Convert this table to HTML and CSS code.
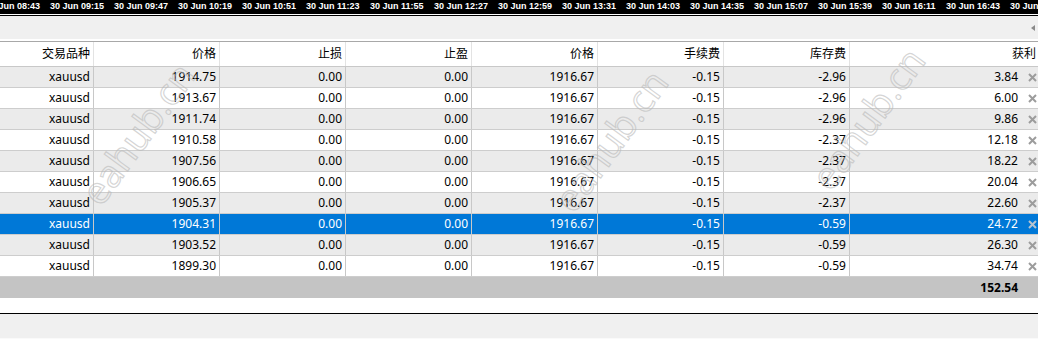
FILE: index.html
```html
<!DOCTYPE html>
<html>
<head>
<meta charset="utf-8">
<link rel="stylesheet" href="styles.css">
</head>
<body>
<div class="page">
  <div class="timebar">
    <span class="tl">30 Jun 08:43</span><span class="tl">30 Jun 09:15</span><span class="tl">30 Jun 09:47</span><span class="tl">30 Jun 10:19</span><span class="tl">30 Jun 10:51</span><span class="tl">30 Jun 11:23</span><span class="tl">30 Jun 11:55</span><span class="tl">30 Jun 12:27</span><span class="tl">30 Jun 12:59</span><span class="tl">30 Jun 13:31</span><span class="tl">30 Jun 14:03</span><span class="tl">30 Jun 14:35</span><span class="tl">30 Jun 15:07</span><span class="tl">30 Jun 15:39</span><span class="tl">30 Jun 16:11</span><span class="tl">30 Jun 16:43</span><span class="tl">30 Jun 17:15</span>
  </div>
  <div class="toolbar"><span class="scroll-arrow"></span></div>
  <div class="gap-white"></div>

  <div class="grid">
    <div class="row head">
      <div class="c">交易品种</div><div class="c">价格</div><div class="c">止损</div><div class="c">止盈</div><div class="c">价格</div><div class="c">手续费</div><div class="c">库存费</div><div class="c last">获利</div>
    </div>

    <div class="row alt">
      <div class="c">xauusd</div><div class="c">1914.75</div><div class="c">0.00</div><div class="c">0.00</div><div class="c">1916.67</div><div class="c">-0.15</div><div class="c">-2.96</div><div class="c last"><span>3.84</span><svg class="x" viewBox="0 0 9 9"><path d="M1 1L8 8M8 1L1 8"/></svg></div>
    </div>
    <div class="row">
      <div class="c">xauusd</div><div class="c">1913.67</div><div class="c">0.00</div><div class="c">0.00</div><div class="c">1916.67</div><div class="c">-0.15</div><div class="c">-2.96</div><div class="c last"><span>6.00</span><svg class="x" viewBox="0 0 9 9"><path d="M1 1L8 8M8 1L1 8"/></svg></div>
    </div>
    <div class="row alt">
      <div class="c">xauusd</div><div class="c">1911.74</div><div class="c">0.00</div><div class="c">0.00</div><div class="c">1916.67</div><div class="c">-0.15</div><div class="c">-2.96</div><div class="c last"><span>9.86</span><svg class="x" viewBox="0 0 9 9"><path d="M1 1L8 8M8 1L1 8"/></svg></div>
    </div>
    <div class="row">
      <div class="c">xauusd</div><div class="c">1910.58</div><div class="c">0.00</div><div class="c">0.00</div><div class="c">1916.67</div><div class="c">-0.15</div><div class="c">-2.37</div><div class="c last"><span>12.18</span><svg class="x" viewBox="0 0 9 9"><path d="M1 1L8 8M8 1L1 8"/></svg></div>
    </div>
    <div class="row alt">
      <div class="c">xauusd</div><div class="c">1907.56</div><div class="c">0.00</div><div class="c">0.00</div><div class="c">1916.67</div><div class="c">-0.15</div><div class="c">-2.37</div><div class="c last"><span>18.22</span><svg class="x" viewBox="0 0 9 9"><path d="M1 1L8 8M8 1L1 8"/></svg></div>
    </div>
    <div class="row">
      <div class="c">xauusd</div><div class="c">1906.65</div><div class="c">0.00</div><div class="c">0.00</div><div class="c">1916.67</div><div class="c">-0.15</div><div class="c">-2.37</div><div class="c last"><span>20.04</span><svg class="x" viewBox="0 0 9 9"><path d="M1 1L8 8M8 1L1 8"/></svg></div>
    </div>
    <div class="row alt">
      <div class="c">xauusd</div><div class="c">1905.37</div><div class="c">0.00</div><div class="c">0.00</div><div class="c">1916.67</div><div class="c">-0.15</div><div class="c">-2.37</div><div class="c last"><span>22.60</span><svg class="x" viewBox="0 0 9 9"><path d="M1 1L8 8M8 1L1 8"/></svg></div>
    </div>
    <div class="row sel">
      <div class="c">xauusd</div><div class="c">1904.31</div><div class="c">0.00</div><div class="c">0.00</div><div class="c">1916.67</div><div class="c">-0.15</div><div class="c">-0.59</div><div class="c last"><span>24.72</span><svg class="x" viewBox="0 0 9 9"><path d="M1 1L8 8M8 1L1 8"/></svg></div>
    </div>
    <div class="row alt">
      <div class="c">xauusd</div><div class="c">1903.52</div><div class="c">0.00</div><div class="c">0.00</div><div class="c">1916.67</div><div class="c">-0.15</div><div class="c">-0.59</div><div class="c last"><span>26.30</span><svg class="x" viewBox="0 0 9 9"><path d="M1 1L8 8M8 1L1 8"/></svg></div>
    </div>
    <div class="row">
      <div class="c">xauusd</div><div class="c">1899.30</div><div class="c">0.00</div><div class="c">0.00</div><div class="c">1916.67</div><div class="c">-0.15</div><div class="c">-0.59</div><div class="c last"><span>34.74</span><svg class="x" viewBox="0 0 9 9"><path d="M1 1L8 8M8 1L1 8"/></svg></div>
    </div>

    <div class="total">
      <span class="total-val">152.54</span>
    </div>
  </div>

  <div class="blank"></div>
  <div class="statusbar"></div>

  <span class="wm wm1">eahub.cn</span>
  <span class="wm wm2">eahub.cn</span>
  <span class="wm wm3">eahub.cn</span>
</div>
</body>
</html>
```

FILE: styles.css
```css
* { box-sizing: border-box; }
html, body { margin: 0; padding: 0; }
body {
  width: 1038px;
  height: 340px;
  overflow: hidden;
  background: #fff;
  font-family: "Noto Sans", "Noto Sans CJK SC", sans-serif;
  font-size: 12px;
  color: #000;
}
.page {
  position: relative;
  width: 1038px;
  height: 340px;
  overflow: hidden;
}

/* time axis */
.timebar {
  height: 15px;
  background: #000;
  border-bottom: 1px solid #fff;
  display: flex;
  margin-left: -14px;
  overflow: hidden;
  white-space: nowrap;
}
.tl {
  flex: 0 0 64px;
  color: #fff;
  font-family: "Liberation Sans", Arial, sans-serif;
  font-weight: bold;
  font-size: 9px;
  line-height: 13px;
}

.toolbar {
  height: 24px;
  background: #f0f0f0;
  border-top: 1px solid #000;
  display: flex;
  align-items: center;
  justify-content: flex-end;
  padding-right: 3px;
}
.scroll-arrow {
  width: 0;
  height: 0;
  border-top: 3px solid transparent;
  border-bottom: 3px solid transparent;
  border-right: 4px solid #8a8a8a;
}
.gap-white {
  height: 2px;
  background: #fff;
}

/* grid */
.grid {
  border-top: 1px solid #a8a8a8;
}
.row {
  display: grid;
  grid-template-columns: 94px 126px 126px 126px 126px 126px 126px 188px;
  height: 21px;
  border-bottom: 1px solid #cdcdcd;
  background: #fff;
}
.row.alt { background: #ebebeb; }
.row.sel { background: #0078d7; color: #fff; }
.row.head {
  height: 25px;
  background: #fff;
  border-bottom: 1px solid #c8c8c8;
}
.c {
  border-right: 1px solid #c8c8c8;
  text-align: right;
  padding: 0 3px 0 0;
  line-height: 20px;
  white-space: nowrap;
  overflow: hidden;
}
.head .c {
  border-right-color: #e3e3e3;
  line-height: 24px;
}
.c.last {
  border-right: none;
  display: flex;
  justify-content: flex-end;
  align-items: center;
  padding-right: 1px;
}
.head .c.last { padding-right: 2px; display: block; }
.x {
  width: 9px;
  height: 9px;
  margin-left: 10px;
  flex: 0 0 9px;
}
.x path {
  stroke: #9c9c9c;
  stroke-width: 2;
  fill: none;
}
.sel .x path { stroke: #b8c4cf; }

.total {
  height: 21px;
  background: #c4c4c4;
  display: flex;
  justify-content: flex-end;
  align-items: center;
  padding-right: 20px;
}
.total-val {
  font-weight: bold;
  line-height: 20px;
}

.blank {
  height: 16px;
  background: #fff;
  border-bottom: 1px solid #000;
}
.statusbar {
  height: 25px;
  background: #f0f0f0;
  border-bottom: 1px solid #fafafa;
}

/* watermark */
.wm {
  position: absolute;
  font-family: "Open Sans", sans-serif;
  font-size: 38px;
  line-height: 50px;
  color: transparent;
  -webkit-text-stroke: 1.2px rgba(185, 185, 185, 0.6);
  transform: rotate(-54deg);
  transform-origin: center;
  white-space: nowrap;
  pointer-events: none;
}
.wm1 { left: 55px; top: 108px; }
.wm2 { left: 528px; top: 115px; }
.wm3 { left: 785px; top: 93px; }
```
